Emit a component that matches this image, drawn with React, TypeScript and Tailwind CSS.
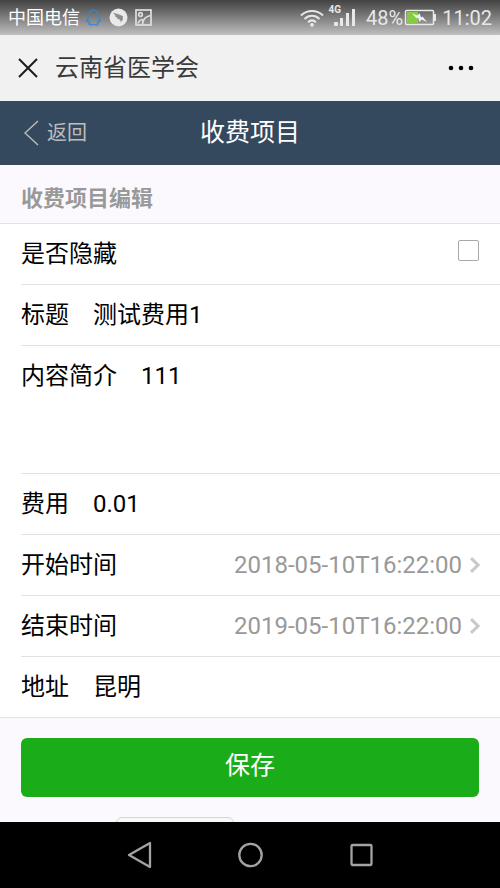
import React, { useState } from 'react';

interface FieldProps {
  id: string;
  label: string;
  value: string;
  onChange: (value: string) => void;
}

const TextField: React.FC<FieldProps> = ({ id, label, value, onChange }) => (
  <div className="flex items-center gap-6 h-[61px] pb-px border-b border-[#e2e2e2] last:border-b-0 last:h-[60px]">
    <label htmlFor={id}>{label}</label>
    <input
      id={id}
      type="text"
      value={value}
      onChange={(e) => onChange(e.target.value)}
      className="flex-1 min-w-0 bg-transparent outline-none"
    />
  </div>
);

const DateField: React.FC<FieldProps> = ({ id, label, value, onChange }) => (
  <div className="flex items-center h-[61px] pr-5 pb-px border-b border-[#e2e2e2]">
    <label htmlFor={id}>{label}</label>
    <input
      id={id}
      type="text"
      value={value}
      onChange={(e) => onChange(e.target.value)}
      className="flex-1 min-w-0 mr-2 bg-transparent text-right text-[#999] outline-none"
    />
    <svg width="10" height="16" viewBox="0 0 10 16" fill="none" stroke="#c8c8cd" strokeWidth="3">
      <path d="M1 1.2 8 8l-7 6.8" />
    </svg>
  </div>
);

const StatusBar: React.FC = () => (
  <div className="flex items-center shrink-0 h-[35px] px-2 bg-gradient-to-b from-[#434343] to-[#c0c0c0] text-[#e8e8e8]">
    <span className="text-lg text-white">中国电信</span>
    <svg className="ml-[6px]" width="15" height="17" viewBox="0 0 15 17" fill="none" stroke="#2f86e6" strokeWidth="1.2">
      <path d="M3.200 6.500C3.200 3 4.800 1 7.500 1s4.300 2 4.300 5.500c1.300 1.700 2.300 3.500 2.300 5.500 0 1-.8.9-1.700-.3-.2 1-.6 1.800-1.100 2.400.9.300 1 1.700-.1 1.700-1.500.1-2.700-.1-3.700-.6-1 .5-2.200.7-3.700.6-1.100 0-1-1.400-.1-1.700-.5-.6-.9-1.400-1.100-2.400-.9 1.200-1.700 1.300-1.700.3 0-2 1-3.800 2.300-5.500Z" />
    </svg>
    <svg className="ml-2" width="19" height="19" viewBox="0 0 19 19">
      <circle cx="9.500" cy="9.500" r="9" fill="#e9e9e9" />
      <path d="M4.500 4.800c3 1.100 6.300 1.800 9.300 3.400.5.4.2 1.300-.5 2.600l1.100.1-3.100 3.800.5-2.300H10.500l.5-1.200c-1.600.2-2.600-.3-3.100-1.200l1.200-.1C7.200 9.500 6 8.600 5.800 7.600l1.700.2C5.800 7 4.800 6.200 4.500 4.800Z" fill="#8c8c8c" />
    </svg>
    <svg className="ml-[7px]" width="17" height="17" viewBox="0 0 17 17" fill="none" stroke="#dedede" strokeWidth="1.700">
      <rect x="1" y="1" width="15" height="15" />
      <circle cx="5.500" cy="5.500" r="1.800" />
      <path d="M3 14.500c1.200-3 2.800-4 5-4M7.500 15c.5-4.500 3-7.500 8-8.500" />
    </svg>
    <svg className="ml-auto" width="24" height="18" viewBox="0 0 24 18" fill="none" stroke="#e8e8e8" strokeWidth="2">
      <path d="M1 6.500c6.200-6 15.800-6 22 0M4.500 10c4.300-4.200 10.700-4.200 15 0M8 13.200c2.400-2.200 5.600-2.200 8 0" />
      <circle cx="12" cy="15.800" r="1.900" fill="#e8e8e8" stroke="none" />
    </svg>
    <span className="self-start mt-1 ml-1 text-[10px] leading-3 font-bold">4G</span>
    <svg className="-ml-[7px]" width="21" height="18" viewBox="0 0 21 18" fill="#e8e8e8">
      <rect x="0" y="13" width="4" height="4" rx="1" />
      <rect x="6" y="9" width="3" height="8" />
      <rect x="12" y="4" width="3" height="13" />
      <rect x="18" y="0" width="3" height="17" />
    </svg>
    <span className="ml-[11px] text-xl">48%</span>
    <svg className="ml-px" width="33" height="17" viewBox="0 0 33 17">
      <rect x="1.500" y="1.500" width="28" height="14" rx="1" fill="none" stroke="#e8e8e8" strokeWidth="1.500" />
      <path d="M31 5v7" stroke="#e8e8e8" strokeWidth="2" />
      <rect x="3" y="3" width="11" height="11" fill="#85cc41" />
      <path d="m8 4.500 5.500 2L15.500 4l1.500 4.500 1.500-1 4.500 5.500-5.500-2.500-2 2.500-1.500-4.500-1.500.8Z" fill="#f2f2f2" />
    </svg>
    <span className="ml-[5px] text-xl">11:02</span>
  </div>
);

const App: React.FC = () => {
  const [hidden, setHidden] = useState(false);
  const [title, setTitle] = useState('测试费用1');
  const [summary, setSummary] = useState('111');
  const [fee, setFee] = useState('0.01');
  const [start, setStart] = useState('2018-05-10T16:22:00');
  const [end, setEnd] = useState('2019-05-10T16:22:00');
  const [address, setAddress] = useState('昆明');

  return (
    <div className="flex flex-col h-screen bg-[#fbf9fe] font-['Roboto','Noto_Sans_CJK_SC',sans-serif] text-black">
      <StatusBar />

      {/* WeChat title bar */}
      <header className="flex items-center shrink-0 h-[66px] pl-[18px] pr-[26px] bg-[#f1f1f1]">
        <button type="button" aria-label="关闭">
          <svg width="20" height="20" viewBox="0 0 20 20" fill="none" stroke="#1c1c1c" strokeWidth="2">
            <path d="m1 1 18 18M19 1 1 19" />
          </svg>
        </button>
        <h1 className="ml-[17px] text-2xl text-[#3a3a3a]">云南省医学会</h1>
        <button type="button" aria-label="更多" className="ml-auto">
          <svg width="26" height="6" viewBox="0 0 26 6" fill="#000">
            <circle cx="3" cy="3" r="2.300" />
            <circle cx="13" cy="3" r="2.300" />
            <circle cx="23" cy="3" r="2.300" />
          </svg>
        </button>
      </header>

      <nav className="grid grid-cols-[1fr_auto_1fr] items-center shrink-0 h-16 px-6 bg-[#34495e]">
        <a href="#back" className="flex items-center gap-2 text-xl text-[#bdbdbd]">
          <svg width="15" height="26" viewBox="0 0 15 26" fill="none" stroke="currentColor" strokeWidth="1.400">
            <path d="M14 1 1 13l13 12" />
          </svg>
          返回
        </a>
        <h2 className="text-[25px] leading-9 text-white">收费项目</h2>
      </nav>

      <main className="flex-1 min-h-0 overflow-hidden">
        <h3 className="pt-[18px] pb-2 pl-[21px] text-[22px] leading-8 font-bold text-[#999]">收费项目编辑</h3>
        <form onSubmit={(e) => e.preventDefault()}>
          <div className="pl-[21px] bg-white border-y border-[#e2e2e2] text-2xl">
            <div className="flex items-center justify-between h-[61px] pr-[21px] border-b border-[#e2e2e2]">
              <label htmlFor="hidden">是否隐藏</label>
              <input
                id="hidden"
                type="checkbox"
                checked={hidden}
                onChange={(e) => setHidden(e.target.checked)}
                className="appearance-none size-[21px] mb-2 rounded-xs border border-[#a8a8a8] bg-white checked:bg-[#1aad19]"
              />
            </div>
            <TextField id="title" label="标题" value={title} onChange={setTitle} />
            <div className="flex gap-6 h-32 pt-3 border-b border-[#e2e2e2] leading-9">
              <label htmlFor="summary">内容简介</label>
              <textarea
                id="summary"
                value={summary}
                onChange={(e) => setSummary(e.target.value)}
                className="flex-1 min-w-0 resize-none bg-transparent outline-none"
              />
            </div>
            <TextField id="fee" label="费用" value={fee} onChange={setFee} />
            <DateField id="start" label="开始时间" value={start} onChange={setStart} />
            <DateField id="end" label="结束时间" value={end} onChange={setEnd} />
            <TextField id="address" label="地址" value={address} onChange={setAddress} />
          </div>
          <div className="px-[21px] pt-5">
            <button type="submit" className="w-full h-[59px] pb-1 rounded-md bg-[#1aad19] text-[25px] text-white">
              保存
            </button>
          </div>
        </form>
        <div className="w-[118px] h-10 mt-5 ml-[116px] rounded-md border border-[#d5d5d5] bg-[#f8f8f8]" />
      </main>

      {/* Android navigation keys */}
      <footer className="flex items-center justify-center gap-[85px] shrink-0 h-[66px] bg-black text-[#a3a3a3]">
        <button type="button" aria-label="后退">
          <svg width="26" height="28" viewBox="0 0 26 28" fill="none" stroke="currentColor" strokeWidth="2.300" strokeLinejoin="round">
            <path d="M24 2v24L3 14Z" />
          </svg>
        </button>
        <button type="button" aria-label="主页">
          <svg width="26" height="26" viewBox="0 0 26 26" fill="none" stroke="currentColor" strokeWidth="2.300">
            <circle cx="13.500" cy="13" r="11.200" />
          </svg>
        </button>
        <button type="button" aria-label="最近任务">
          <svg width="26" height="26" viewBox="0 0 26 26" fill="none" stroke="currentColor" strokeWidth="2.300">
            <rect x="3.500" y="3" width="20" height="20" rx="1" />
          </svg>
        </button>
      </footer>
    </div>
  );
};

export default App;
